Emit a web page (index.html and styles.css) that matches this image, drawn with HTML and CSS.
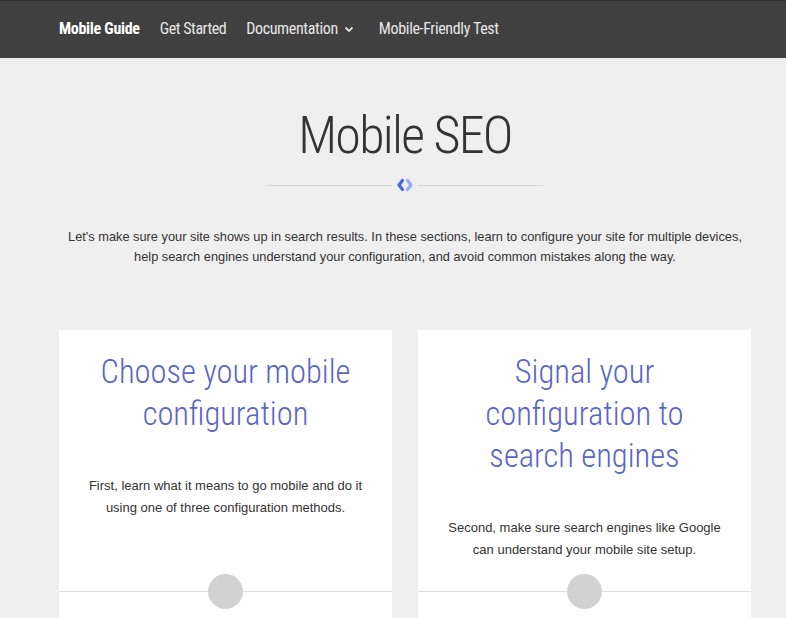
FILE: index.html
```html
<!DOCTYPE html>
<html>
<head>
<meta charset="utf-8">
<link rel="stylesheet" href="styles.css">
</head>
<body>
<header class="topbar">
  <nav class="nav">
    <a class="nav-item brand">Mobile Guide</a>
    <a class="nav-item">Get Started</a>
    <a class="nav-item">Documentation <svg class="chev" width="10" height="7" viewBox="0 0 10 7"><path d="M1.5 1.5 L5 5 L8.5 1.5" fill="none" stroke="#e0e0e0" stroke-width="1.8"/></svg></a>
    <a class="nav-item">Mobile-Friendly Test</a>
  </nav>
</header>
<main class="wrap">
  <h1 class="title">Mobile SEO</h1>
  <div class="divider">
    <span class="rule"></span>
    <svg class="logo" width="18" height="14" viewBox="0 0 18 14">
      <path d="M6.5 2.5 L3 7 L6.5 11.5" fill="none" stroke="#4a66e0" stroke-width="3.2" stroke-linejoin="round" stroke-linecap="round"/>
      <path d="M11.5 2.5 L15 7 L11.5 11.5" fill="none" stroke="#8fb0f6" stroke-width="3.2" stroke-linejoin="round" stroke-linecap="round"/>
    </svg>
    <span class="rule"></span>
  </div>
  <p class="intro">Let's make sure your site shows up in search results. In these sections, learn to configure your site for multiple devices, help search engines understand your configuration, and avoid common mistakes along the way.</p>
  <section class="cards">
    <article class="card">
      <div class="card-body">
        <h2 class="card-title">Choose your mobile configuration</h2>
        <p class="card-text">First, learn what it means to go mobile and do it using one of three configuration methods.</p>
      </div>
      <div class="card-foot"><span class="dot"></span></div>
    </article>
    <article class="card">
      <div class="card-body">
        <h2 class="card-title">Signal your configuration to search engines</h2>
        <p class="card-text">Second, make sure search engines like Google can understand your mobile site setup.</p>
      </div>
      <div class="card-foot"><span class="dot"></span></div>
    </article>
  </section>
</main>
</body>
</html>
```

FILE: styles.css
```css
html, body {
  margin: 0;
  padding: 0;
}
body {
  background: #efefef;
  font-family: "Liberation Sans", Arial, sans-serif;
  color: #333;
  overflow: hidden;
}
.topbar {
  background: #404040;
  border-top: 1px solid #333;
  height: 57px;
}
.nav {
  display: flex;
  align-items: center;
  height: 54px;
  margin-left: 59px;
  gap: 20px;
  font-family: "Roboto Condensed", "Liberation Sans Narrow", Roboto, sans-serif;
  font-size: 16px;
  letter-spacing: -0.35px;
}
.nav-item {
  color: #e6e6e6;
  display: flex;
  align-items: center;
  gap: 6px;
}
.nav-item.brand {
  color: #fff;
  font-weight: bold;
  letter-spacing: -0.3px;
}
.nav-item:nth-child(2) {
  letter-spacing: -0.45px;
}
.nav-item:last-child {
  margin-left: 5px;
}
.chev {
  display: block;
  margin-top: 2px;
}
.wrap {
  width: 692px;
  margin-left: 59px;
}
.title {
  margin: 0;
  padding-top: 48px;
  text-align: center;
  font-family: "Roboto Condensed", Roboto, sans-serif;
  font-weight: 300;
  font-size: 52px;
  line-height: 60px;
  letter-spacing: -1.7px;
  color: #333;
}
.divider {
  display: flex;
  align-items: center;
  justify-content: center;
  gap: 4px;
  margin-top: 12px;
}
.rule {
  width: 125px;
  height: 1px;
  background: #d8d8d8;
}
.logo {
  display: block;
}
.intro {
  margin: 35px 0 0;
  text-align: center;
  font-size: 12.8px;
  line-height: 20px;
  color: #333;
}
.cards {
  display: flex;
  gap: 26px;
  margin-top: 63px;
}
.card {
  flex: 1;
  background: #fff;
  display: flex;
  flex-direction: column;
  height: 300px;
}
.card-body {
  padding: 21px 26px 0;
  text-align: center;
}
.card-title {
  margin: 0;
  font-family: "Roboto Condensed", Roboto, sans-serif;
  font-weight: 300;
  font-size: 32.5px;
  line-height: 42px;
  color: #5a66c6;
}
.card-text {
  margin: 40px 0 0;
  font-size: 13px;
  line-height: 22px;
  color: #333;
}
.card-foot {
  margin-top: auto;
  margin-bottom: 38px;
  height: 1px;
  background: #ddd;
  display: flex;
  justify-content: center;
  align-items: center;
}
.dot {
  width: 35px;
  height: 35px;
  border-radius: 50%;
  background: #d2d2d2;
  flex: none;
}
```
